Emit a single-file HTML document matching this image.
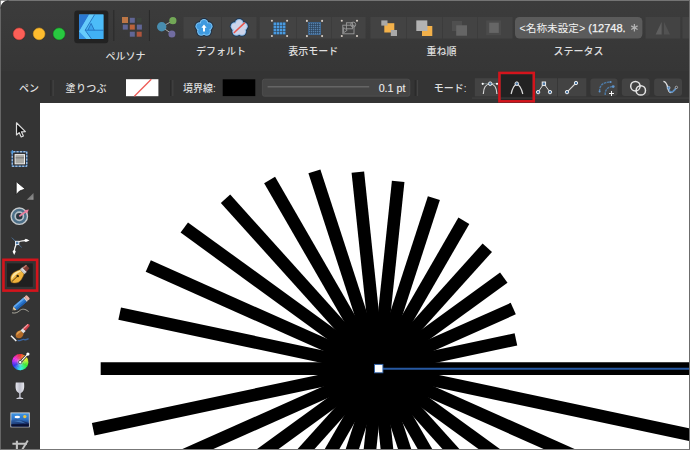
<!DOCTYPE html>
<html><head><meta charset="utf-8"><title>Affinity Designer</title>
<style>
html,body{margin:0;padding:0;background:#3b3b3b;font-family:"Liberation Sans",sans-serif;}
body{width:690px;height:450px;overflow:hidden;position:relative;}
svg{display:block;position:absolute;left:0;top:0;}
</style></head><body>
<svg width="690" height="450" viewBox="0 0 690 450">
<defs>
<clipPath id="cv"><rect x="40" y="103" width="649" height="346"/></clipPath>
<radialGradient id="wh" cx="0.5" cy="0.5" r="0.5"><stop offset="0" stop-color="#ffffff" stop-opacity="0.85"/><stop offset="0.45" stop-color="#ffffff" stop-opacity="0.15"/><stop offset="1" stop-color="#ffffff" stop-opacity="0"/></radialGradient>
<linearGradient id="gl" x1="0" y1="0" x2="1" y2="0"><stop offset="0" stop-color="#e6e6ee"/><stop offset="0.5" stop-color="#bfc0cc"/><stop offset="1" stop-color="#e8e8ee"/></linearGradient>
<linearGradient id="sky" x1="0" y1="0" x2="0" y2="1"><stop offset="0" stop-color="#3f97e6"/><stop offset="0.45" stop-color="#2f74c8"/><stop offset="1" stop-color="#0f1d52"/></linearGradient>
<linearGradient id="tb" x1="0" y1="0" x2="0" y2="1"><stop offset="0" stop-color="#3c3c3c"/><stop offset="1" stop-color="#363636"/></linearGradient>
<linearGradient id="mt" x1="0" y1="0" x2="0.6" y2="1"><stop offset="0" stop-color="#3470bc"/><stop offset="1" stop-color="#101c4e"/></linearGradient>
<linearGradient id="fly" x1="0" y1="0" x2="1" y2="1"><stop offset="0.3" stop-color="#6a6a6a"/><stop offset="1" stop-color="#9a9a9a"/></linearGradient>
<linearGradient id="adg" x1="0" y1="0" x2="1" y2="1"><stop offset="0" stop-color="#57c9fb"/><stop offset="1" stop-color="#3fb0f7"/></linearGradient>
</defs>
<rect x="0" y="0" width="690" height="450" fill="#3b3b3b"/>
<rect x="0" y="0" width="690" height="71" fill="url(#tb)"/>
<rect x="0" y="71" width="690" height="32" fill="#343434"/>
<rect x="0" y="103" width="40" height="347" fill="#343434"/>
<rect x="40" y="103" width="650" height="347" fill="#ffffff"/>
<g clip-path="url(#cv)" stroke="#000" stroke-width="12.6" stroke-linecap="butt">
<line x1="378.5" y1="368.6" x2="515.93" y2="339.39"/>
<line x1="378.5" y1="368.6" x2="513.26" y2="308.60"/>
<line x1="378.5" y1="368.6" x2="503.79" y2="277.57"/>
<line x1="378.5" y1="368.6" x2="487.30" y2="247.76"/>
<line x1="378.5" y1="368.6" x2="463.86" y2="220.76"/>
<line x1="378.5" y1="368.6" x2="433.89" y2="198.14"/>
<line x1="378.5" y1="368.6" x2="398.17" y2="181.45"/>
<line x1="378.5" y1="368.6" x2="357.85" y2="172.12"/>
<line x1="378.5" y1="368.6" x2="314.40" y2="171.33"/>
<line x1="378.5" y1="368.6" x2="269.61" y2="180.00"/>
<line x1="378.5" y1="368.6" x2="225.51" y2="198.69"/>
<line x1="378.5" y1="368.6" x2="184.29" y2="227.50"/>
<line x1="378.5" y1="368.6" x2="148.26" y2="266.09"/>
<line x1="378.5" y1="368.6" x2="119.68" y2="313.59"/>
<line x1="378.5" y1="368.6" x2="100.69" y2="368.60"/>
<line x1="378.5" y1="368.6" x2="93.20" y2="429.24"/>
<line x1="378.5" y1="368.6" x2="98.75" y2="493.15"/>
<line x1="378.5" y1="368.6" x2="118.39" y2="557.58"/>
<line x1="378.5" y1="368.6" x2="152.63" y2="619.45"/>
<line x1="378.5" y1="368.6" x2="201.30" y2="675.51"/>
<line x1="378.5" y1="368.6" x2="263.52" y2="722.47"/>
<line x1="378.5" y1="368.6" x2="337.67" y2="757.11"/>
<line x1="378.5" y1="368.6" x2="421.37" y2="776.49"/>
<line x1="378.5" y1="368.6" x2="511.56" y2="778.13"/>
<line x1="378.5" y1="368.6" x2="604.55" y2="760.12"/>
<line x1="378.5" y1="368.6" x2="696.10" y2="721.33"/>
<line x1="378.5" y1="368.6" x2="781.66" y2="661.51"/>
<line x1="378.5" y1="368.6" x2="856.47" y2="581.41"/>
<line x1="378.5" y1="368.6" x2="915.81" y2="482.81"/>
<line x1="378.5" y1="368.6" x2="955.22" y2="368.60"/>
</g>
<rect x="382" y="367.75" width="307" height="2" fill="#2759a2"/>
<rect x="374.5" y="364.4" width="8.4" height="8.4" fill="#ffffff" stroke="#2f62aa" stroke-width="0.9"/>
<circle cx="19.1" cy="33.85" r="6.7" fill="#2a2a2a" opacity="0.55"/>
<circle cx="19.1" cy="33.85" r="5.9" fill="#fc5f57" stroke="#e0443e" stroke-width="0.6"/>
<circle cx="39.1" cy="33.85" r="6.7" fill="#2a2a2a" opacity="0.55"/>
<circle cx="39.1" cy="33.85" r="5.9" fill="#fdbc2e" stroke="#dea123" stroke-width="0.6"/>
<circle cx="59.1" cy="33.85" r="6.7" fill="#2a2a2a" opacity="0.55"/>
<circle cx="59.1" cy="33.85" r="5.9" fill="#28c840" stroke="#1aab29" stroke-width="0.6"/>
<rect x="74.3" y="10.6" width="34" height="32.6" rx="3" fill="#222222"/>
<rect x="79.1" y="14.6" width="24.3" height="24.3" fill="url(#adg)"/>
<polygon points="79.1,14.6 89.2,14.6 79.1,31.6" fill="#2a78d2"/>
<polygon points="89.2,14.6 94.6,14.6 85.2,30.2 91.4,38.9 86.2,38.9 79.1,31.6" fill="#66cbfb"/>
<polygon points="79.1,31.6 86.2,38.9 79.1,38.9" fill="#3896e6"/>
<polygon points="94.6,14.6 103.4,14.6 103.4,30.2 85.2,30.2" fill="#4cbcf8"/>
<polygon points="85.2,30.2 103.4,30.2 103.4,38.9 91.4,38.9" fill="#41b0f4"/>
<polygon points="87.9,30.2 91.1,23.4 94.3,30.2" fill="#3ba4ee"/>
<g stroke="#1f68b8" stroke-width="0.8" fill="none"><path d="M94.6 14.6 L85.2 30.2 L91.4 38.9"/><path d="M85.2 30.2 H103.4"/><path d="M87.9 30.2 L91.1 23.4 L94.3 30.2"/></g>
<rect x="113.3" y="10" width="1" height="31" fill="#2a2a2a"/>
<rect x="148.9" y="10" width="1" height="31" fill="#2a2a2a"/>
<g opacity="0.82">
<rect x="122.00" y="17.00" width="6" height="6" fill="#d98449"/>
<rect x="129.80" y="17.80" width="5" height="5" fill="#6a70aa"/>
<rect x="136.90" y="18.00" width="4.6" height="4.6" fill="#3c463c"/>
<rect x="122.80" y="24.60" width="5" height="5" fill="#6a70aa"/>
<rect x="129.80" y="24.60" width="5" height="5" fill="#d96c3c"/>
<rect x="136.90" y="24.60" width="5" height="5" fill="#6a70aa"/>
<rect x="129.80" y="31.70" width="5" height="5" fill="#6a70aa"/>
<rect x="136.70" y="31.70" width="5" height="5" fill="#c85c3e"/>
</g>
<g opacity="0.85">
<g stroke="#c8c8c8" stroke-width="0.9"><line x1="161.7" y1="26.8" x2="172.9" y2="20.7"/><line x1="161.7" y1="26.8" x2="171.9" y2="33.9"/></g>
<circle cx="161.7" cy="26.8" r="4.7" fill="#4b9cc4"/>
<circle cx="172.9" cy="20.7" r="3.6" fill="#7cbb5c"/>
<circle cx="171.9" cy="33.9" r="3.5" fill="#7b75b2"/>
</g>
<rect x="183.5" y="17" width="37.50" height="21.60" rx="0" fill="#434343"/>
<rect x="221.8" y="17" width="34.70" height="21.60" rx="0" fill="#434343"/>
<g fill="#1c2f45"><circle cx="204.00" cy="23.18" r="5.10"/><circle cx="208.39" cy="26.37" r="5.10"/><circle cx="206.72" cy="31.54" r="5.10"/><circle cx="201.28" cy="31.54" r="5.10"/><circle cx="199.61" cy="26.37" r="5.10"/><circle cx="204.0" cy="27.8" r="5.52"/></g>
<g fill="#7cc2f2"><circle cx="204.00" cy="23.18" r="4.20"/><circle cx="208.39" cy="26.37" r="4.20"/><circle cx="206.72" cy="31.54" r="4.20"/><circle cx="201.28" cy="31.54" r="4.20"/><circle cx="199.61" cy="26.37" r="4.20"/><circle cx="204.0" cy="27.8" r="4.62"/></g>
<g fill="#3f9adf"><circle cx="204.00" cy="23.18" r="3.10"/><circle cx="208.39" cy="26.37" r="3.10"/><circle cx="206.72" cy="31.54" r="3.10"/><circle cx="201.28" cy="31.54" r="3.10"/><circle cx="199.61" cy="26.37" r="3.10"/><circle cx="204.0" cy="27.8" r="3.52"/></g>
<path d="M204 24.4 L206.6 27.7 H205 V31.4 H203 V27.7 H201.4 Z" fill="#ffffff"/>
<g fill="#1f3854"><circle cx="239.20" cy="23.18" r="5.10"/><circle cx="243.59" cy="26.37" r="5.10"/><circle cx="241.92" cy="31.54" r="5.10"/><circle cx="236.48" cy="31.54" r="5.10"/><circle cx="234.81" cy="26.37" r="5.10"/><circle cx="239.2" cy="27.8" r="5.52"/></g>
<g fill="#8fbce8"><circle cx="239.20" cy="23.18" r="4.20"/><circle cx="243.59" cy="26.37" r="4.20"/><circle cx="241.92" cy="31.54" r="4.20"/><circle cx="236.48" cy="31.54" r="4.20"/><circle cx="234.81" cy="26.37" r="4.20"/><circle cx="239.2" cy="27.8" r="4.62"/></g>
<g fill="#cdd4ea"><circle cx="239.20" cy="23.18" r="3.20"/><circle cx="243.59" cy="26.37" r="3.20"/><circle cx="241.92" cy="31.54" r="3.20"/><circle cx="236.48" cy="31.54" r="3.20"/><circle cx="234.81" cy="26.37" r="3.20"/><circle cx="239.2" cy="27.8" r="3.62"/></g>
<line x1="233.8" y1="33" x2="244.8" y2="22.6" stroke="#e8554c" stroke-width="1.5"/>
<rect x="259.6" y="17" width="36.40" height="21.60" rx="0" fill="#434343"/>
<rect x="296.6" y="17" width="34.40" height="21.60" rx="0" fill="#434343"/>
<rect x="331.6" y="17" width="34.00" height="21.60" rx="0" fill="#434343"/>
<rect x="273.3" y="22.2" width="12.4" height="12.4" fill="#27496b" opacity="0.55"/>
<rect x="273.60" y="22.50" width="2.5" height="2.5" fill="#4a9be0"/>
<rect x="273.60" y="25.60" width="2.5" height="2.5" fill="#4a9be0"/>
<rect x="273.60" y="28.70" width="2.5" height="2.5" fill="#4a9be0"/>
<rect x="273.60" y="31.80" width="2.5" height="2.5" fill="#4a9be0"/>
<rect x="276.70" y="22.50" width="2.5" height="2.5" fill="#4a9be0"/>
<rect x="276.70" y="25.60" width="2.5" height="2.5" fill="#4a9be0"/>
<rect x="276.70" y="28.70" width="2.5" height="2.5" fill="#4a9be0"/>
<rect x="276.70" y="31.80" width="2.5" height="2.5" fill="#4a9be0"/>
<rect x="279.80" y="22.50" width="2.5" height="2.5" fill="#4a9be0"/>
<rect x="279.80" y="25.60" width="2.5" height="2.5" fill="#4a9be0"/>
<rect x="279.80" y="28.70" width="2.5" height="2.5" fill="#4a9be0"/>
<rect x="279.80" y="31.80" width="2.5" height="2.5" fill="#4a9be0"/>
<rect x="282.90" y="22.50" width="2.5" height="2.5" fill="#4a9be0"/>
<rect x="282.90" y="25.60" width="2.5" height="2.5" fill="#4a9be0"/>
<rect x="282.90" y="28.70" width="2.5" height="2.5" fill="#4a9be0"/>
<rect x="282.90" y="31.80" width="2.5" height="2.5" fill="#4a9be0"/>
<circle cx="271.9" cy="20.799999999999997" r="1.05" fill="#d8cfc6"/>
<circle cx="271.9" cy="36.0" r="1.05" fill="#d8cfc6"/>
<circle cx="287.1" cy="20.799999999999997" r="1.05" fill="#d8cfc6"/>
<circle cx="287.1" cy="36.0" r="1.05" fill="#d8cfc6"/>
<rect x="308.5" y="22.5" width="12" height="12" fill="#2a425a" stroke="#3d6c9c" stroke-width="0.8"/>
<rect x="309.25" y="23.25" width="1" height="1" fill="#7ab2e6"/>
<rect x="309.25" y="25.25" width="1" height="1" fill="#7ab2e6"/>
<rect x="309.25" y="27.25" width="1" height="1" fill="#7ab2e6"/>
<rect x="309.25" y="29.25" width="1" height="1" fill="#7ab2e6"/>
<rect x="309.25" y="31.25" width="1" height="1" fill="#7ab2e6"/>
<rect x="309.25" y="33.25" width="1" height="1" fill="#7ab2e6"/>
<rect x="311.25" y="23.25" width="1" height="1" fill="#7ab2e6"/>
<rect x="311.25" y="25.25" width="1" height="1" fill="#7ab2e6"/>
<rect x="311.25" y="27.25" width="1" height="1" fill="#7ab2e6"/>
<rect x="311.25" y="29.25" width="1" height="1" fill="#7ab2e6"/>
<rect x="311.25" y="31.25" width="1" height="1" fill="#7ab2e6"/>
<rect x="311.25" y="33.25" width="1" height="1" fill="#7ab2e6"/>
<rect x="313.25" y="23.25" width="1" height="1" fill="#7ab2e6"/>
<rect x="313.25" y="25.25" width="1" height="1" fill="#7ab2e6"/>
<rect x="313.25" y="27.25" width="1" height="1" fill="#7ab2e6"/>
<rect x="313.25" y="29.25" width="1" height="1" fill="#7ab2e6"/>
<rect x="313.25" y="31.25" width="1" height="1" fill="#7ab2e6"/>
<rect x="313.25" y="33.25" width="1" height="1" fill="#7ab2e6"/>
<rect x="315.25" y="23.25" width="1" height="1" fill="#7ab2e6"/>
<rect x="315.25" y="25.25" width="1" height="1" fill="#7ab2e6"/>
<rect x="315.25" y="27.25" width="1" height="1" fill="#7ab2e6"/>
<rect x="315.25" y="29.25" width="1" height="1" fill="#7ab2e6"/>
<rect x="315.25" y="31.25" width="1" height="1" fill="#7ab2e6"/>
<rect x="315.25" y="33.25" width="1" height="1" fill="#7ab2e6"/>
<rect x="317.25" y="23.25" width="1" height="1" fill="#7ab2e6"/>
<rect x="317.25" y="25.25" width="1" height="1" fill="#7ab2e6"/>
<rect x="317.25" y="27.25" width="1" height="1" fill="#7ab2e6"/>
<rect x="317.25" y="29.25" width="1" height="1" fill="#7ab2e6"/>
<rect x="317.25" y="31.25" width="1" height="1" fill="#7ab2e6"/>
<rect x="317.25" y="33.25" width="1" height="1" fill="#7ab2e6"/>
<rect x="319.25" y="23.25" width="1" height="1" fill="#7ab2e6"/>
<rect x="319.25" y="25.25" width="1" height="1" fill="#7ab2e6"/>
<rect x="319.25" y="27.25" width="1" height="1" fill="#7ab2e6"/>
<rect x="319.25" y="29.25" width="1" height="1" fill="#7ab2e6"/>
<rect x="319.25" y="31.25" width="1" height="1" fill="#7ab2e6"/>
<rect x="319.25" y="33.25" width="1" height="1" fill="#7ab2e6"/>
<circle cx="306.9" cy="20.9" r="1.05" fill="#d8cfc6"/>
<circle cx="306.9" cy="36.1" r="1.05" fill="#d8cfc6"/>
<circle cx="322.1" cy="20.9" r="1.05" fill="#d8cfc6"/>
<circle cx="322.1" cy="36.1" r="1.05" fill="#d8cfc6"/>
<g fill="none" stroke="#9a9a9a" stroke-width="0.9"><rect x="342.79999999999995" y="25.2" width="11.2" height="8.6"/><rect x="346.4" y="22.799999999999997" width="6" height="6"/><circle cx="353.2" cy="24.599999999999998" r="2.5"/><path d="M343.59999999999997 27.599999999999998 L347.2 30.2 L343.59999999999997 32.8 Z"/></g>
<circle cx="341.79999999999995" cy="20.799999999999997" r="1.05" fill="#d8cfc6"/>
<circle cx="341.79999999999995" cy="36.0" r="1.05" fill="#d8cfc6"/>
<circle cx="357.0" cy="20.799999999999997" r="1.05" fill="#d8cfc6"/>
<circle cx="357.0" cy="36.0" r="1.05" fill="#d8cfc6"/>
<rect x="370.4" y="17" width="35.90" height="21.60" rx="0" fill="#434343"/>
<rect x="406.9" y="17" width="35.30" height="21.60" rx="0" fill="#434343"/>
<rect x="442.8" y="17" width="34.20" height="21.60" rx="0" fill="#434343"/>
<rect x="477.6" y="17" width="35.00" height="21.60" rx="0" fill="#434343"/>
<rect x="384.3" y="23.2" width="10" height="9.3" fill="#f3b14a"/>
<rect x="381.3" y="20.4" width="6.2" height="5.2" fill="#a9a9a9"/>
<rect x="390.8" y="30" width="6.2" height="6" fill="#a9a9a9"/>
<rect x="422" y="26" width="10.3" height="10" fill="#f3b14a"/>
<rect x="416.3" y="20.4" width="11" height="10.6" fill="#b3b3b3"/>
<rect x="420.8" y="25.4" width="6.4" height="5.6" fill="#b3b3b3"/>
<rect x="452" y="21" width="10" height="10" fill="#4f4f4f"/><rect x="456.2" y="25.3" width="10.8" height="10.4" fill="#656565"/>
<rect x="486.2" y="20.4" width="14.8" height="14.8" fill="#4b4b4b"/><rect x="489.2" y="22.7" width="9.6" height="10.2" fill="#666666"/>
<rect x="515" y="17" width="127.4" height="21.6" rx="4.5" fill="#5b5b5b"/>
<rect x="645.5" y="17" width="34.90" height="21.60" rx="0" fill="#434343"/>
<rect x="682.4" y="17" width="6.60" height="21.60" rx="0" fill="#434343"/>
<polygon points="661.6,22 661.6,34.4 655.6,34.4" fill="#5f5f5f"/><polygon points="664,22 664,34.4 670,34.4" fill="#525252"/>
<text x="125.5" y="60" text-anchor="middle" font-family="&quot;Liberation Sans&quot;, &quot;Noto Sans CJK JP&quot;, sans-serif" font-size="10" font-weight="500" fill="#dedede">ペルソナ</text>
<text x="221" y="55" text-anchor="middle" font-family="&quot;Liberation Sans&quot;, &quot;Noto Sans CJK JP&quot;, sans-serif" font-size="10" font-weight="500" fill="#dedede">デフォルト</text>
<text x="313.2" y="55.2" text-anchor="middle" font-family="&quot;Liberation Sans&quot;, &quot;Noto Sans CJK JP&quot;, sans-serif" font-size="10" font-weight="500" fill="#dedede">表示モード</text>
<text x="441.6" y="55.2" text-anchor="middle" font-family="&quot;Liberation Sans&quot;, &quot;Noto Sans CJK JP&quot;, sans-serif" font-size="10" font-weight="500" fill="#dedede">重ね順</text>
<text x="578.4" y="55" text-anchor="middle" font-family="&quot;Liberation Sans&quot;, &quot;Noto Sans CJK JP&quot;, sans-serif" font-size="10" font-weight="500" fill="#dedede">ステータス</text>
<text x="519.6" y="31.5" font-family="&quot;Liberation Sans&quot;, &quot;Noto Sans CJK JP&quot;, sans-serif" font-size="10.6" fill="#f2f2f2" textLength="65.6" lengthAdjust="spacingAndGlyphs">&lt;名称未設定&gt;</text>
<text x="588.28" y="31.5" font-family="Liberation Sans, sans-serif" font-size="11" fill="#f2f2f2" stroke="#f2f2f2" stroke-width="0.25">(12748.</text>
<path d="M634.4 24 V31.4 M631.2 25.85 L637.6 29.55 M637.6 25.85 L631.2 29.55" stroke="#b2b2b2" stroke-width="1.25" fill="none"/>
<text x="19" y="91.6" font-family="&quot;Liberation Sans&quot;, &quot;Noto Sans CJK JP&quot;, sans-serif" font-size="10" font-weight="500" fill="#dedede">ペン</text>
<rect x="50.3" y="80" width="1.1" height="16" fill="#2a2a2a"/><rect x="52.6" y="80" width="1.1" height="16" fill="#434343"/>
<text x="65.6" y="91.8" font-family="&quot;Liberation Sans&quot;, &quot;Noto Sans CJK JP&quot;, sans-serif" font-size="10" font-weight="500" fill="#dedede" textLength="41" lengthAdjust="spacing">塗りつぶ</text>
<rect x="126" y="79.2" width="32.4" height="17" fill="#ffffff"/>
<line x1="134.4" y1="96.2" x2="151.3" y2="79.2" stroke="#ee5a55" stroke-width="1.3"/>
<rect x="170.0" y="80" width="1.1" height="16" fill="#2a2a2a"/><rect x="172.3" y="80" width="1.1" height="16" fill="#434343"/>
<text x="183" y="92" font-family="&quot;Liberation Sans&quot;, &quot;Noto Sans CJK JP&quot;, sans-serif" font-size="10" font-weight="500" fill="#dedede">境界線:</text>
<rect x="222.7" y="79.3" width="32.6" height="16.8" fill="#000000"/>
<rect x="262.4" y="79.2" width="147.4" height="17" rx="2" fill="#454545" stroke="#505050" stroke-width="0.8"/>
<rect x="267.6" y="86.2" width="101.6" height="1.2" fill="#6e6e6e"/>
<text x="405.4" y="91.6" text-anchor="end" font-family="Liberation Sans, sans-serif" font-size="10.7" fill="#ececec" stroke="#ececec" stroke-width="0.12">0.1 pt</text>
<rect x="414.7" y="80" width="1.1" height="16" fill="#2a2a2a"/><rect x="417.0" y="80" width="1.1" height="16" fill="#434343"/>
<text x="433.8" y="92" font-family="&quot;Liberation Sans&quot;, &quot;Noto Sans CJK JP&quot;, sans-serif" font-size="10" font-weight="500" fill="#dedede">モード:</text>
<rect x="474.8" y="78.2" width="23.40" height="18.20" rx="0" fill="#434343"/>
<rect x="501" y="74.4" width="31.4" height="25.4" fill="#222222"/>
<rect x="535.2" y="78.2" width="22.00" height="18.20" rx="0" fill="#434343"/>
<rect x="557.9" y="78.2" width="28.40" height="18.20" rx="0" fill="#434343"/>
<rect x="590.4" y="78.4" width="27.10" height="17.60" rx="3" fill="#434343"/>
<rect x="621.8" y="78.4" width="27.90" height="17.60" rx="3" fill="#434343"/>
<rect x="654.1" y="78.4" width="27.90" height="17.60" rx="3" fill="#434343"/>
<rect x="472" y="97.6" width="217" height="0.9" fill="#454545"/>
<path d="M483.3 94 C483.6 86.5 486.5 84 490.2 84 C493.9 84 496.6 86.5 496.9 94" fill="none" stroke="#d8d8d8" stroke-width="1.2"/>
<line x1="482.7" y1="83.7" x2="497" y2="83.7" stroke="#9aa" stroke-width="0.6"/>
<circle cx="482.7" cy="83.8" r="1.1" fill="#fff"/><circle cx="497" cy="83.8" r="1.1" fill="#fff"/>
<circle cx="490.2" cy="83.7" r="1.8" fill="#4f7aa6" stroke="#f0f0f0" stroke-width="0.95"/>
<path d="M511.1 94 C512.6 87.5 514.2 84.6 516.8 84.6 C519.4 84.6 521.2 87.5 522.8 94" fill="none" stroke="#e0e0e0" stroke-width="1.2"/>
<circle cx="516.8" cy="83.7" r="1.8" fill="#4f7aa6" stroke="#f0f0f0" stroke-width="0.95"/>
<path d="M538.1 92.1 L543.9 83.7 L550 92.1" fill="none" stroke="#d8d8d8" stroke-width="1"/>
<rect x="542.2" y="82" width="3.4" height="3.4" fill="#4f7aa6" stroke="#f0f0f0" stroke-width="0.95"/>
<circle cx="538.1" cy="92.1" r="1.7" fill="#4f7aa6" stroke="#f0f0f0" stroke-width="0.95"/>
<circle cx="550" cy="92.1" r="1.7" fill="#4f7aa6" stroke="#f0f0f0" stroke-width="0.95"/>
<line x1="567" y1="92.1" x2="576" y2="83" stroke="#d8d8d8" stroke-width="1.1"/>
<circle cx="567" cy="92.1" r="1.7" fill="#4f7aa6" stroke="#f0f0f0" stroke-width="0.95"/>
<circle cx="576" cy="83" r="1.7" fill="#4f7aa6" stroke="#f0f0f0" stroke-width="0.95"/>
<g fill="none" stroke="#4d7aa6" stroke-width="1.4" stroke-dasharray="2.6 0.7"><path d="M599.6 91.5 C599.4 85 603 82.2 610.6 82"/><path d="M605.2 95 C605 89.5 607.5 86.8 613.4 86.6"/></g>
<circle cx="613.2" cy="86.6" r="1.4" fill="#5f93c9"/><circle cx="610.6" cy="82" r="1" fill="#5f93c9"/><circle cx="599.6" cy="91.6" r="1" fill="#5f93c9"/>
<path d="M609 93.5 H614 M611.5 91 V96" stroke="#f6f6f6" stroke-width="1"/>
<g fill="none" stroke="#e6e6e6" stroke-width="1.5"><circle cx="635.4" cy="86.2" r="4.7"/><circle cx="640.8" cy="90.4" r="4.7"/></g>
<path d="M663.4 81.4 C668 82 667.2 88.6 669 91.4 C671 94 674.4 91 676.4 87.4" fill="none" stroke="#e0e0e0" stroke-width="1.4"/>
<path d="M668.6 87.6 C669.4 92.5 672 94.6 676.4 87.4" fill="none" stroke="#4f86bf" stroke-width="1.4"/>
<circle cx="668.6" cy="87.8" r="1.5" fill="#4f86bf" stroke="#dfe8f2" stroke-width="0.5"/><circle cx="676.4" cy="87.4" r="1.2" fill="#3c3c3c" stroke="#dadada" stroke-width="0.6"/>
<rect x="499.4" y="72.9" width="34.4" height="28.4" fill="none" stroke="#d4141c" stroke-width="2.5"/>
<path d="M16.5 122.8 L16.5 135 L19.2 132.6 L21.2 137 L23.4 136 L21.4 131.8 L25.4 131.6 Z" fill="#151515" stroke="#dcdcdc" stroke-width="1.2" stroke-linejoin="round"/>
<rect x="12.2" y="151.8" width="14.6" height="14.4" fill="none" stroke="#2f73bd" stroke-width="1.1"/>
<rect x="12.2" y="151.8" width="14.6" height="14.4" fill="none" stroke="#e4eefa" stroke-width="0.9" stroke-dasharray="2 1.4" stroke-dashoffset="-1"/>
<path d="M10.6 152 H14 M12.3 150 V154" stroke="#4e9be0" stroke-width="1"/>
<rect x="15.1" y="154.6" width="9.4" height="9.2" fill="#a9a9a4" stroke="#ededed" stroke-width="1"/>
<rect x="15.6" y="157.4" width="8.4" height="0.9" fill="#6e6e6e"/>
<path d="M16.2 181.6 L16.2 194.6 L19.6 191 L25.2 189 Z" fill="#ffffff" stroke="#1c1c1c" stroke-width="0.8" stroke-linejoin="round"/>
<polygon points="33.5,192.9 33.5,199.7 26.7,199.7" fill="url(#fly)"/>
<circle cx="19.3" cy="216.2" r="8.2" fill="#4c6f88" stroke="#c6cacd" stroke-width="1.4"/>
<circle cx="19.3" cy="216.2" r="4.1" fill="#2b3640" stroke="#b4c0c9" stroke-width="1.7"/>
<line x1="19.3" y1="216.2" x2="26.6" y2="211" stroke="#ea7f9e" stroke-width="1.7"/>
<polygon points="28.8,209.4 24.4,210.2 27.2,213.6" fill="#ea7f9e"/>
<path d="M17.1 243 L11.8 237.6 M18.4 244.4 L21.7 247.4" stroke="#4a6c90" stroke-width="1"/>
<path d="M18.6 241.8 C21 240.8 24 240.5 28 240.4" fill="none" stroke="#f0f0f0" stroke-width="1.3"/>
<path d="M16 244.6 C14.8 247 14.3 250 14.2 253" fill="none" stroke="#f0f0f0" stroke-width="1.3"/>
<path d="M29.6 240.4 L25.8 238.7 L23.6 240.4 L25.8 242.1 Z" fill="#ffffff"/>
<path d="M14.2 255 L12.6 251.6 L14.2 249.4 L15.8 251.6 Z" fill="#ffffff"/>
<rect x="15.5" y="241.3" width="3.3" height="3.3" fill="#4f7aa6" stroke="#e8eef5" stroke-width="0.9"/>
<rect x="7" y="263.4" width="25.8" height="23.4" fill="#1f1f1f"/>
<g transform="translate(11.2 282.2) rotate(-43.5)"><path d="M0 0 C2 -4.6 5.6 -5.8 9 -5.1 C12 -4.4 14 -3.4 15.2 -2.8 L15.2 2.8 C14 3.4 12 4.4 9 5.1 C5.6 5.8 2 4.6 0 0 Z" fill="#efb23c" stroke="#8a5a12" stroke-width="0.5"/><path d="M2 -1.6 C4.4 -4.6 8 -5 11 -4 C12.6 -3.4 14 -2.8 14.8 -2.4 L14.8 -1 C10 -2.6 6 -2.6 2 -1.6 Z" fill="#fbe6a2"/><path d="M0.8 0 H8.6" stroke="#3c2a08" stroke-width="0.8"/><circle cx="9" cy="0" r="1.25" fill="#2e2208"/><rect x="15.2" y="-3.1" width="3.2" height="6.2" fill="#ececec" stroke="#8a8a8a" stroke-width="0.4"/><path d="M16.3 -3.1 V3.1 M17.4 -3.1 V3.1" stroke="#9a9a9a" stroke-width="0.45"/><path d="M18.4 -2.9 L22.8 -2.5 L22.8 2.5 L18.4 2.9 Z" fill="#7d3a32"/><path d="M18.4 -2.9 L22.8 -2.5 L22.8 -1 L18.4 -1.3 Z" fill="#b9776c"/></g>
<rect x="3.45" y="259.8" width="33.7" height="30.8" fill="none" stroke="#d4141c" stroke-width="2.6"/>
<path d="M12 312.8 C15 313.6 17.6 312.6 19.8 310.6 C22 308.6 25 308.6 28.6 311.6" fill="none" stroke="#a9a79c" stroke-width="1"/>
<g transform="translate(12.3 310.6) rotate(-40.5)"><polygon points="0,0 3.8,-2.6 3.8,2.6" fill="#d9c29a"/><polygon points="0,0 1.5,-1 1.5,1" fill="#2a2a2a"/><rect x="3.8" y="-2.6" width="13" height="5.2" fill="#2b78cf"/><rect x="3.8" y="-2.6" width="13" height="1.7" fill="#62a8ee"/><rect x="3.8" y="1.2" width="13" height="1.4" fill="#1f5fae"/><rect x="16.8" y="-2.6" width="1.5" height="5.2" fill="#d4d4d4"/><rect x="18.3" y="-2.6" width="2.8" height="5.2" rx="1" fill="#eeb0a4"/></g>
<path d="M17.6 340.4 C20 341.4 22 338.8 24.4 339.6 C26 340.2 27.4 339.2 28.6 338.6" fill="none" stroke="#3a66a2" stroke-width="1.3"/>
<line x1="11" y1="335.8" x2="16.3" y2="341" stroke="#f2f2f2" stroke-width="1.5"/>
<g transform="translate(16.4 337.6) rotate(-46)"><path d="M0 0 C1 -4 5 -4.4 8 -2.4 L8 2.4 C5 4.4 1 4 0 0 Z" fill="#b36b28"/><path d="M1.4 -1.2 C2.8 -3.4 5.4 -3.4 8 -2 L8 -0.4 C5.6 -1.4 3.2 -1.4 1.4 -1.2 Z" fill="#e0a050"/><rect x="8" y="-2" width="3.2" height="4" fill="#e2e2e2"/><path d="M11.2 -1.8 L17.6 -1.4 C18.6 -0.7 18.6 0.7 17.6 1.4 L11.2 1.8 Z" fill="#cf3f48"/><path d="M11.2 -1.8 L17.6 -1.4 L17.6 -0.3 L11.2 -0.6 Z" fill="#f2a0a6"/></g>
<path d="M20.2 362.1 L19.35 354.04 A8.1 8.1 0 0 1 21.47 354.10 Z" fill="hsl(0,88%,56%)"/>
<path d="M20.2 362.1 L21.05 354.04 A8.1 8.1 0 0 1 23.10 354.54 Z" fill="hsl(12,88%,56%)"/>
<path d="M20.2 362.1 L22.70 354.40 A8.1 8.1 0 0 1 24.61 355.31 Z" fill="hsl(24,88%,56%)"/>
<path d="M20.2 362.1 L24.25 355.09 A8.1 8.1 0 0 1 25.93 356.37 Z" fill="hsl(36,88%,56%)"/>
<path d="M20.2 362.1 L25.62 356.08 A8.1 8.1 0 0 1 26.99 357.69 Z" fill="hsl(48,88%,56%)"/>
<path d="M20.2 362.1 L26.75 357.34 A8.1 8.1 0 0 1 27.76 359.20 Z" fill="hsl(60,88%,56%)"/>
<path d="M20.2 362.1 L27.60 358.81 A8.1 8.1 0 0 1 28.20 360.83 Z" fill="hsl(72,88%,56%)"/>
<path d="M20.2 362.1 L28.12 360.42 A8.1 8.1 0 0 1 28.29 362.52 Z" fill="hsl(84,88%,56%)"/>
<path d="M20.2 362.1 L28.30 362.10 A8.1 8.1 0 0 1 28.02 364.20 Z" fill="hsl(96,88%,56%)"/>
<path d="M20.2 362.1 L28.12 363.78 A8.1 8.1 0 0 1 27.42 365.78 Z" fill="hsl(108,88%,56%)"/>
<path d="M20.2 362.1 L27.60 365.39 A8.1 8.1 0 0 1 26.49 367.20 Z" fill="hsl(120,88%,56%)"/>
<path d="M20.2 362.1 L26.75 366.86 A8.1 8.1 0 0 1 25.30 368.39 Z" fill="hsl(132,88%,56%)"/>
<path d="M20.2 362.1 L25.62 368.12 A8.1 8.1 0 0 1 23.88 369.32 Z" fill="hsl(144,88%,56%)"/>
<path d="M20.2 362.1 L24.25 369.11 A8.1 8.1 0 0 1 22.30 369.92 Z" fill="hsl(156,88%,56%)"/>
<path d="M20.2 362.1 L22.70 369.80 A8.1 8.1 0 0 1 20.62 370.19 Z" fill="hsl(168,88%,56%)"/>
<path d="M20.2 362.1 L21.05 370.16 A8.1 8.1 0 0 1 18.93 370.10 Z" fill="hsl(180,88%,56%)"/>
<path d="M20.2 362.1 L19.35 370.16 A8.1 8.1 0 0 1 17.30 369.66 Z" fill="hsl(192,88%,56%)"/>
<path d="M20.2 362.1 L17.70 369.80 A8.1 8.1 0 0 1 15.79 368.89 Z" fill="hsl(204,88%,56%)"/>
<path d="M20.2 362.1 L16.15 369.11 A8.1 8.1 0 0 1 14.47 367.83 Z" fill="hsl(216,88%,56%)"/>
<path d="M20.2 362.1 L14.78 368.12 A8.1 8.1 0 0 1 13.41 366.51 Z" fill="hsl(228,88%,56%)"/>
<path d="M20.2 362.1 L13.65 366.86 A8.1 8.1 0 0 1 12.64 365.00 Z" fill="hsl(240,88%,56%)"/>
<path d="M20.2 362.1 L12.80 365.39 A8.1 8.1 0 0 1 12.20 363.37 Z" fill="hsl(252,88%,56%)"/>
<path d="M20.2 362.1 L12.28 363.78 A8.1 8.1 0 0 1 12.11 361.68 Z" fill="hsl(264,88%,56%)"/>
<path d="M20.2 362.1 L12.10 362.10 A8.1 8.1 0 0 1 12.38 360.00 Z" fill="hsl(276,88%,56%)"/>
<path d="M20.2 362.1 L12.28 360.42 A8.1 8.1 0 0 1 12.98 358.42 Z" fill="hsl(288,88%,56%)"/>
<path d="M20.2 362.1 L12.80 358.81 A8.1 8.1 0 0 1 13.91 357.00 Z" fill="hsl(300,88%,56%)"/>
<path d="M20.2 362.1 L13.65 357.34 A8.1 8.1 0 0 1 15.10 355.81 Z" fill="hsl(312,88%,56%)"/>
<path d="M20.2 362.1 L14.78 356.08 A8.1 8.1 0 0 1 16.52 354.88 Z" fill="hsl(324,88%,56%)"/>
<path d="M20.2 362.1 L16.15 355.09 A8.1 8.1 0 0 1 18.10 354.28 Z" fill="hsl(336,88%,56%)"/>
<path d="M20.2 362.1 L17.70 354.40 A8.1 8.1 0 0 1 19.78 354.01 Z" fill="hsl(348,88%,56%)"/>
<circle cx="20.2" cy="362.1" r="8.1" fill="url(#wh)"/>
<line x1="20.2" y1="362.1" x2="27.6" y2="354.4" stroke="#1e1e1e" stroke-width="2.6"/>
<line x1="20.2" y1="362.1" x2="27.6" y2="354.4" stroke="#ffffff" stroke-width="1.2"/>
<circle cx="27.9" cy="354.1" r="1.6" fill="#fff"/><circle cx="20.2" cy="362.1" r="1.7" fill="#fff" stroke="#1e1e1e" stroke-width="0.6"/>
<path d="M15.8 382.4 H24 C24.4 386 24.6 390.4 22 392.2 C21 392.8 20.6 393 20.6 394 V397.2 L23.2 398.2 V398.9 H16.5 V398.2 L19.2 397.2 V394 C19.2 393 18.8 392.8 17.8 392.2 C15.2 390.4 15.4 386 15.8 382.4 Z" fill="url(#gl)"/>
<rect x="10.9" y="412.9" width="18.4" height="14" fill="url(#sky)" stroke="#d4d4d4" stroke-width="0.9"/>
<ellipse cx="17.3" cy="417" rx="2.8" ry="1.2" fill="#ffffff"/>
<circle cx="24.8" cy="416.6" r="1.7" fill="#e9c545"/>
<path d="M11.4 420.6 L16 418.8 L22 420.4 L28.8 423 V426.4 H11.4 Z" fill="url(#mt)"/>
<path d="M14 421 L20 420.6 L26 423.4 L18 422 Z" fill="#5a9be0" opacity="0.55"/>
<path d="M11.4 424.2 H28.8 V426.4 H11.4 Z" fill="#0a1030"/>
<path d="M12.4 443.8 H27 M16.9 440.8 V450" stroke="#c2c2c2" stroke-width="2.1" fill="none"/>
<path d="M27.8 440.6 L22 450" stroke="#c2c2c2" stroke-width="1.9"/>
<rect x="0" y="0" width="690" height="1" fill="#747474"/>
<rect x="0" y="0" width="1" height="450" fill="#666666"/>
<rect x="689" y="0" width="1" height="450" fill="#6c6c6c"/>
<rect x="0" y="449" width="690" height="1" fill="#777777"/>
<path d="M0.8 0.8 H8 A7.2 7.2 0 0 0 0.8 8 Z" fill="#fbfbfb"/>
<path d="M8.4 0.9 A7.5 7.5 0 0 0 0.9 8.4" fill="none" stroke="#303030" stroke-width="1"/>
</svg>
</body></html>
